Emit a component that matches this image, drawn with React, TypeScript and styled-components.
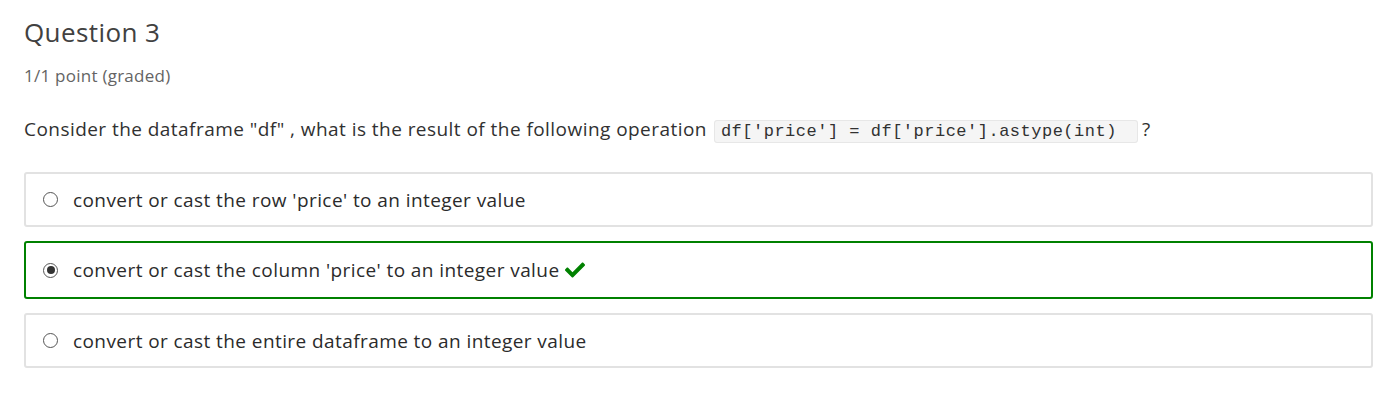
import React from "react";
import styled, { createGlobalStyle } from "styled-components";
import { FaCheck } from "react-icons/fa";

const Global = createGlobalStyle`
  html, body { margin: 0; padding: 0; background: #fff; }
  body { font-family: "Open Sans", "Noto Sans", sans-serif; color: #313131; }
`;

const Page = styled.div`
  padding: 14px 14px 0 24px;
  display: flex;
  flex-direction: column;
`;

const Title = styled.h3`
  margin: 0;
  font-size: 26px;
  letter-spacing: 0.4px;
  font-weight: 400;
  line-height: 36px;
  color: #414141;
`;

const Progress = styled.div`
  margin-top: 16px;
  font-size: 17px;
  letter-spacing: 0.25px;
  line-height: 20px;
  color: #646464;
`;

const Prompt = styled.p`
  margin: 30px 0 0 0;
  font-size: 19px;
  letter-spacing: 0.45px;
  line-height: 26px;
  color: #313131;
`;

const Code = styled.code`
  font-family: "Liberation Mono", "Courier New", monospace;
  font-size: 17px;
  letter-spacing: 0.5px;
  background: #f5f5f5;
  border: 1px solid #e7e7e7;
  border-radius: 3px;
  padding: 1px 20px 1px 6px;
  margin: 0 4px 0 7px;
  color: #313131;
`;

const Options = styled.div`
  margin-top: 27px;
  display: flex;
  flex-direction: column;
  gap: 14px;
`;

const Option = styled.label<{ $correct?: boolean }>`
  display: flex;
  align-items: center;
  box-sizing: border-box;
  height: ${(p) => (p.$correct ? 58 : 55)}px;
  padding: 0 17px;
  border: 2px solid ${(p) => (p.$correct ? "#008100" : "#e2e2e2")};
  border-radius: 3px;
  font-size: 19px;
  letter-spacing: 0.42px;
  color: #2b2b2b;
`;

const Radio = styled.span<{ $checked?: boolean }>`
  width: 15px;
  height: 15px;
  margin-right: 15px;
  box-sizing: border-box;
  border-radius: 50%;
  border: 1px solid #555;
  background: #fff;
  display: flex;
  align-items: center;
  justify-content: center;
  flex: none;
  &::after {
    content: "";
    display: ${(p) => (p.$checked ? "block" : "none")};
    width: 8px;
    height: 8px;
    border-radius: 50%;
    background: #333;
  }
`;

const CheckMark = styled(FaCheck)`
  color: #008100;
  margin-left: 6px;
  flex: none;
`;

export default function App() {
  return (
    <>
      <Global />
      <Page>
        <Title>Question 3</Title>
        <Progress>1/1 point (graded)</Progress>
        <Prompt>
          Consider the dataframe "df" , what is the result of the following operation
          <Code>df['price'] = df['price'].astype(int)</Code>?
        </Prompt>
        <Options>
          <Option>
            <Radio />
            convert or cast the row 'price' to an integer value
          </Option>
          <Option $correct>
            <Radio $checked />
            convert or cast the column 'price' to an integer value
            <CheckMark size={20} />
          </Option>
          <Option>
            <Radio />
            convert or cast the entire dataframe to an integer value
          </Option>
        </Options>
      </Page>
    </>
  );
}
